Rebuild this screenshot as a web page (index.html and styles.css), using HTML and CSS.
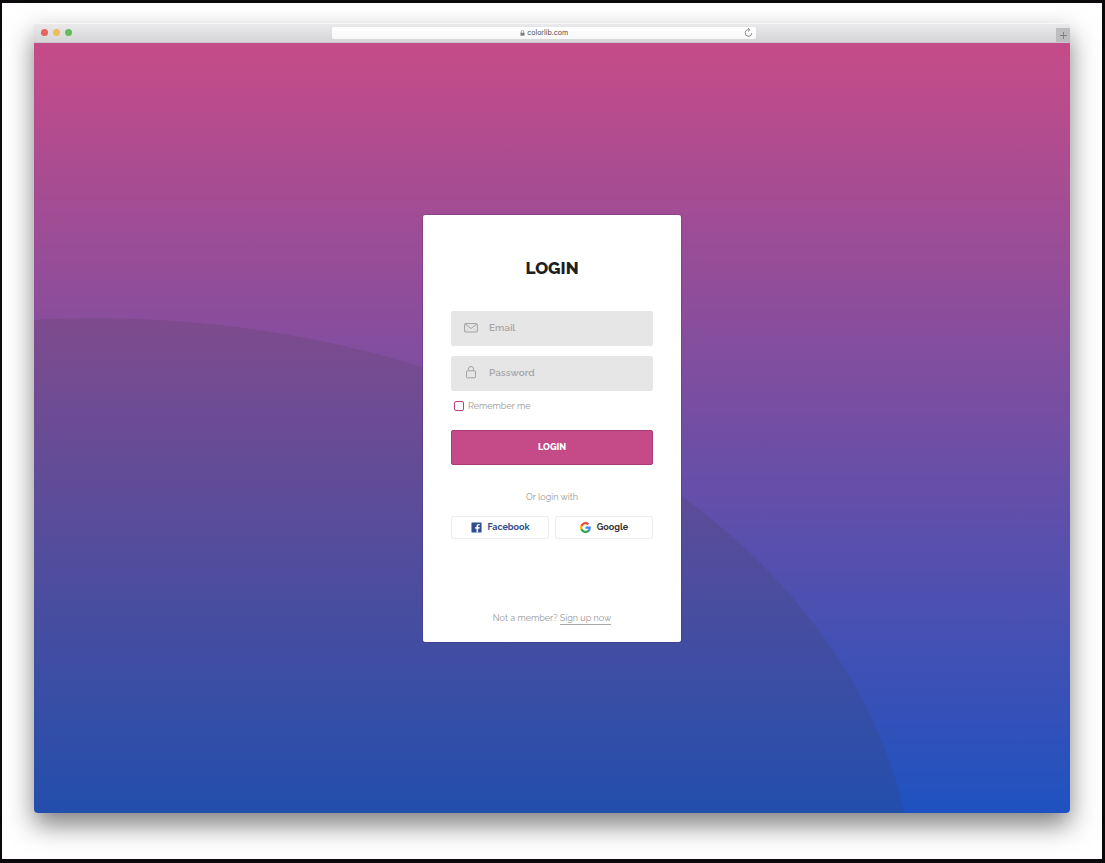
FILE: index.html
```html
<!DOCTYPE html>
<html lang="en">
<head>
<meta charset="utf-8">
<meta name="viewport" content="width=device-width, initial-scale=1">
<title>Login</title>
<link rel="stylesheet" href="styles.css">
</head>
<body class="desktop">
<div class="window">
  <header class="toolbar">
    <div class="lights">
      <span class="light light-close"></span>
      <span class="light light-minimize"></span>
      <span class="light light-zoom"></span>
    </div>
    <div class="address">
      <span class="address-site">
        <svg class="address-lock" viewBox="0 0 10 12" aria-hidden="true"><path d="M2.5 6V3.500a2.500 2.500 0 0 1 5 0V6" fill="none" stroke="#808080" stroke-width="1.4"/><rect x="1" y="5.3" width="8" height="6" rx="1" fill="#808080"/></svg>
        <span>colorlib.com</span>
      </span>
      <button class="reload" type="button" aria-label="Reload">
        <svg viewBox="0 0 16 16" aria-hidden="true"><path d="M9 3.200A5.800 5.800 0 1 0 13.800 9" fill="none" stroke="#777" stroke-width="1.5"/><path d="M7 0l3.500 3.200L7 6.400" fill="none" stroke="#777" stroke-width="1.5"/></svg>
      </button>
    </div>
    <button class="new-tab" type="button" aria-label="New tab">
      <svg viewBox="0 0 14 14" aria-hidden="true"><path d="M7.500 4v7M4 7.500h7" stroke="#808080" stroke-width="1"/></svg>
    </button>
  </header>
  <main class="stage">
    <form class="card">
      <h1 class="title">LOGIN</h1>
      <div class="fields">
        <label class="field">
          <svg class="field-icon" viewBox="0 0 14 14" aria-hidden="true"><rect x=".6" y="2.600" width="12.800" height="8.400" rx=".8"/><path d="M1 3l6 4.500L13 3"/><path d="M1 10.600l3.500-3.500M13 10.600L9.500 7.100" opacity=".35"/></svg>
          <input class="field-input" type="email" placeholder="Email" aria-label="Email">
        </label>
        <label class="field">
          <svg class="field-icon" viewBox="0 0 14 14" aria-hidden="true"><rect x="2.500" y="4.800" width="9" height="7" rx="1"/><path d="M4.300 4.800V3.200a2.700 2.700 0 0 1 5.400 0v1.600"/></svg>
          <input class="field-input" type="password" placeholder="Password" aria-label="Password">
        </label>
      </div>
      <label class="remember"><input class="tick" type="checkbox"><span>Remember me</span></label>
      <button class="submit" type="submit">LOGIN</button>
      <p class="divider">Or login with</p>
      <div class="social">
        <button class="social-button facebook" type="button">
          <svg class="social-icon" viewBox="0 0 24 24" aria-hidden="true"><rect x="1" y="1" width="22" height="22" rx="1.3" fill="#304d8d"/><path d="M15.500 23v-8.500h2.900l.5-3.400h-3.400V9c0-1 .4-1.700 1.800-1.700H19v-3c-.4-.1-1.400-.2-2.500-.2-2.600 0-4.400 1.500-4.400 4.400v2.600H9.200v3.400h2.900V23z" fill="#fff"/></svg>
          <span>Facebook</span>
        </button>
        <button class="social-button google" type="button">
          <svg class="social-icon" viewBox="0 0 24 24" aria-hidden="true"><path fill="#4285f4" d="M23.500 12.300c0-.8-.1-1.600-.2-2.300H12v4.500h6.500a5.500 5.500 0 0 1-2.400 3.600v3h3.900c2.200-2.100 3.500-5.100 3.500-8.800z"/><path fill="#34a853" d="M12 24c3.200 0 6-1.100 7.900-2.900l-3.900-3a7.200 7.200 0 0 1-10.700-3.800h-4v3.100A12 12 0 0 0 12 24z"/><path fill="#fbbc05" d="M5.300 14.300a7.200 7.200 0 0 1 0-4.600V6.600h-4a12 12 0 0 0 0 10.800z"/><path fill="#ea4335" d="M12 4.800c1.800 0 3.300.6 4.600 1.800L20 3.200A12 12 0 0 0 1.300 6.600l4 3.100A7.100 7.100 0 0 1 12 4.800z"/></svg>
          <span>Google</span>
        </button>
      </div>
      <p class="signup">Not a member? <a class="signup-link" href="#">Sign up now</a></p>
    </form>
  </main>
</div>
</body>
</html>
```
FILE: styles.css
```css
* {
  box-sizing: border-box;
}

button,
input {
  margin: 0;
  padding: 0;
  font: inherit;
}

button {
  cursor: pointer;
}

.desktop {
  display: flex;
  min-height: 100vh;
  margin: 0;
  padding: 20px 32px 46px;
  border: solid #0c090c;
  border-width: 3px 3px 4px 2px;
  background: #fff;
  font-family: Raleway, Lato, sans-serif;
  font-size: 9px;
  line-height: 14px;
}

.window {
  display: flex;
  flex: 1;
  flex-direction: column;
  overflow: hidden;
  border-radius: 4px;
  box-shadow: 0 12px 26px rgba(0, 0, 0, 0.5);
}

.toolbar {
  display: grid;
  grid-template-columns: 288fr 409fr 303fr;
  align-items: center;
  height: 20px;
  border-bottom: 1px solid #c6c4c7;
  background: linear-gradient(#ebebed, #d5d5d7);
  box-shadow: inset 0 1px 0 #f6f6f8;
}

.lights {
  display: flex;
  gap: 5px;
  padding-left: 7px;
}

.light {
  width: 7px;
  height: 7px;
  border-radius: 50%;
}

.light-close {
  background: #e3655b;
}

.light-minimize {
  background: #efbd59;
}

.light-zoom {
  background: #62be5b;
}

.address {
  display: grid;
  grid-template-columns: 12px 1fr 12px;
  align-items: center;
  height: 12px;
  border-radius: 2px;
  background: linear-gradient(#fff, #f8f8f8);
}

.address-site {
  display: flex;
  grid-column: 2;
  align-items: center;
  justify-content: center;
  gap: 2px;
  color: #4a4a4a;
  font-family: Inter, sans-serif;
  font-size: 7px;
  line-height: 12px;
}

.address-lock {
  width: 5px;
  height: 6px;
}

.reload {
  display: flex;
  width: 9px;
  height: 9px;
  border: 0;
  background: none;
}

.new-tab {
  display: flex;
  align-self: end;
  justify-self: end;
  width: 14px;
  height: 14px;
  border: 0;
  background: #bdbcbf;
}

.stage {
  display: flex;
  flex: 1;
  align-items: center;
  justify-content: center;
  background:
    radial-gradient(79.2% 76.6% at 5.9% 112.3%, rgba(60, 60, 60, 0.15) 99.9%, transparent 100%),
    linear-gradient(#c64b88, #1e52c0);
}

.card {
  display: flex;
  flex-direction: column;
  width: 260px;
  padding: 43px 28px 17px;
  border: 1px solid rgba(60, 20, 90, 0.2);
  border-radius: 3px;
  background: #fff;
  background-clip: padding-box;
  color: #999;
}

.title {
  margin: 0 0 33px;
  color: #202020;
  font-size: 17px;
  font-weight: 800;
  line-height: 20px;
  text-align: center;
}

.fields {
  display: flex;
  flex-direction: column;
  gap: 10px;
}

.field {
  display: flex;
  align-items: center;
  gap: 11px;
  height: 35px;
  padding: 0 13px;
  border-radius: 2px;
  background: #e6e6e6;
}

.field-icon {
  flex: none;
  width: 14px;
  height: 14px;
  fill: none;
  stroke: #a2a2a2;
  stroke-width: 1;
}

.field-input {
  flex: 1;
  min-width: 0;
  border: 0;
  outline: 0;
  background: none;
  color: #666;
  font-size: 10px;
  font-weight: 600;
}

.field-input::placeholder {
  color: #a6a6a6;
  opacity: 1;
}

.remember {
  display: flex;
  align-items: center;
  gap: 4px;
  margin: 8px 0 17px 3px;
}

.tick {
  width: 10px;
  height: 10px;
  appearance: none;
  border: 1px solid #b8457f;
  border-radius: 2px;
  background: #fff;
}

.tick:checked {
  background: #c44b88;
}

.submit {
  height: 35px;
  border: 1px solid #a83a78;
  border-radius: 2px;
  background: #c44b88;
  color: #fff;
  font-weight: 800;
}

.divider {
  margin: 25px 0 12px;
  text-align: center;
}

.social {
  display: grid;
  grid-template-columns: 1fr 1fr;
  gap: 6px;
}

.social-button {
  display: flex;
  align-items: center;
  justify-content: center;
  gap: 6px;
  height: 23px;
  border: 1px solid #ececec;
  border-radius: 2px;
  background: #fff;
  font-weight: 700;
}

.facebook {
  color: #304d8d;
}

.google {
  color: #333;
}

.social-icon {
  width: 11px;
  height: 11px;
}

.signup {
  margin: 72px 0 0;
  text-align: center;
}

.signup-link {
  display: inline-block;
  border-bottom: 1px solid #aaa;
  color: inherit;
  line-height: 12px;
  text-decoration: none;
}
```
